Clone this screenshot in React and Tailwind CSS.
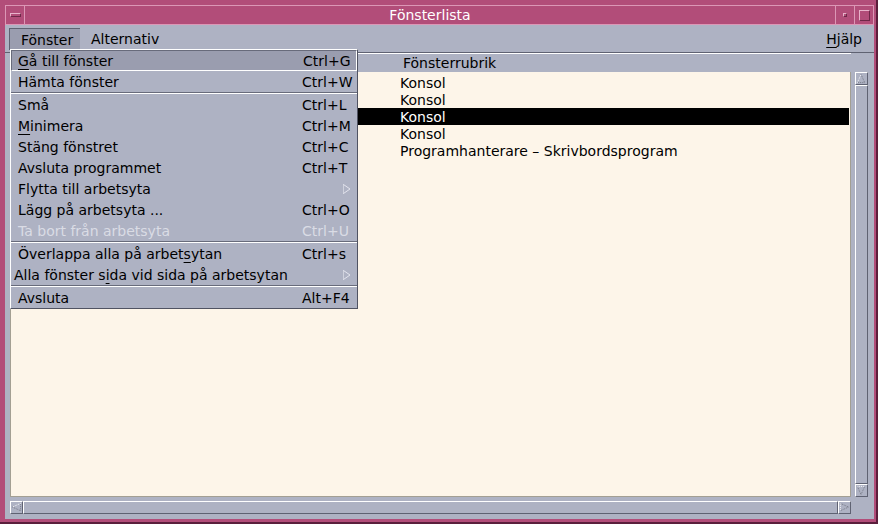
import React from "react";

const Mn = ({ children }) => (
  <span className="underline underline-offset-[3px] decoration-1">{children}</span>
);

const SubArrow = () => (
  <svg width="9" height="10" viewBox="0 0 9 10">
    <path d="M1.5 0.5 V9.5" stroke="#f2f3f7" strokeWidth="1" strokeDasharray="1 1" />
    <path d="M1.5 0.5 L8 5 L1.5 9.5" fill="none" stroke="#e4e6ee" strokeWidth="1" />
  </svg>
);

const MenuItem = ({ label, shortcut, arrow, active, disabled, pl = "pl-[7px]" }) => (
  <div
    className={`flex h-[21px] items-center ${
      active
        ? "bg-[#9a9daf] border-t border-l border-r border-b border-[#686b7b] border-r-white border-b-white"
        : ""
    } ${disabled ? "text-[#dadce5]" : "text-black"}`}
  >
    <div className={`w-[291px] shrink-0 whitespace-nowrap ${active ? "pl-[6px]" : pl}`}>{label}</div>
    <div className="flex-1 whitespace-nowrap">
      {arrow ? (
        <span className="flex pl-[40px]">
          <SubArrow />
        </span>
      ) : (
        shortcut
      )}
    </div>
  </div>
);

const Sep = () => <div className="h-[2px] border-t border-b border-t-[#686b7b] border-b-white" />;

const ArrowBox = ({ dir }) => {
  const paths = {
    up: ["M1.5 10.5 L5.5 1.5", "M5.5 1.5 L9.5 10.5 L1.5 10.5"],
    down: ["M1.5 1.5 L9.5 1.5", "M1.5 1.5 L5.5 10.5 L9.5 1.5"],
    left: ["M10.5 1.5 L1.5 5.5", "M1.5 5.5 L10.5 9.5 L10.5 1.5"],
    right: ["M1.5 1.5 L1.5 9.5", "M1.5 1.5 L10.5 5.5 L1.5 9.5"],
  }[dir];
  return (
    <div className="w-[13px] h-[13px] shrink-0 bg-[#aeb2c3] border border-t-white border-l-white border-r-[#5f6272] border-b-[#5f6272] flex items-center justify-center">
      <svg width="11" height="11" viewBox="0 0 12 12">
        <path d={paths[1]} fill="none" stroke="#70737f" strokeWidth="1" strokeDasharray="1 1" />
        <path d={paths[0]} fill="none" stroke="#ffffff" strokeWidth="1" strokeDasharray="1 1" />
      </svg>
    </div>
  );
};

const rows = ["Konsol", "Konsol", "Konsol", "Konsol", "Programhanterare – Skrivbordsprogram"];

export default function App() {
  return (
    <div className="relative w-[878px] h-[524px] bg-[#b24d79] pt-[5px] pl-[5px] pr-[2px] pb-[3px] border-r-[2px] border-b-[2px] border-[#5a1f3c] flex flex-col font-['DejaVu_Sans',sans-serif] text-[14px] leading-none select-none">
      {/* title bar */}
      <div className="h-[20px] shrink-0 flex border border-[#dc97b6]">
        <div className="w-[19px] border-r border-[#dc97b6] flex items-center justify-center">
          <div className="w-[11px] h-[4px] border border-t-[#e8b2ca] border-l-[#e8b2ca] border-r-[#6e2848] border-b-[#6e2848] bg-[#b24d79]" />
        </div>
        <div className="flex-1 flex items-center justify-center text-white">Fönsterlista</div>
        <div className="w-[19px] border-l border-[#dc97b6] flex items-center justify-center">
          <div className="w-[4px] h-[4px] border border-t-[#e8b2ca] border-l-[#e8b2ca] border-r-[#6e2848] border-b-[#6e2848]" />
        </div>
        <div className="w-[19px] border-l border-[#dc97b6] flex items-center justify-center">
          <div className="w-[11px] h-[11px] border border-t-[#e8b2ca] border-l-[#e8b2ca] border-r-[#6e2848] border-b-[#6e2848]" />
        </div>
      </div>

      {/* panel */}
      <div className="flex-1 bg-[#aeb2c3] flex flex-col">
        <div className="h-[28px] shrink-0 flex items-start pt-[3px] pl-[4px] pr-[12px] border-b border-[#5f6272]">
          <div className="h-[22px] w-[71px] pl-[11px] flex items-center bg-[#9a9daf] border-t border-l border-[#5f6272]">
            Fönster
          </div>
          <div className="h-[22px] ml-[11px] flex items-center">Alternativ</div>
          <div className="h-[22px] ml-auto flex items-center">
            <Mn>H</Mn>jälp
          </div>
        </div>

        <div className="flex-1 flex pl-[5px] pr-[6px] pb-[4px] gap-[4px]">
          <div className="w-[841px] flex flex-col">
            <div className="h-[19px] flex">
              <div className="w-[346px] border-t border-white" />
              <div className="flex-1 border-t border-l border-white flex items-center pl-[46px]">Fönsterrubrik</div>
            </div>
            <div className="h-[425px] bg-[#fdf5e9] border-l border-r border-b border-[#a39f93] pt-[2px] px-[1px]">
              {rows.map((r, i) => (
                <div
                  key={i}
                  className={`h-[17px] flex items-center pl-[388px] whitespace-nowrap ${
                    i === 2 ? "bg-black text-white" : "text-black"
                  }`}
                >
                  {r}
                </div>
              ))}
            </div>
            <div className="mt-[4px] h-[13px] flex">
              <ArrowBox dir="left" />
              <div className="flex-1 border border-t-white border-l-white border-r-[#5f6272] border-b-[#5f6272]" />
              <ArrowBox dir="right" />
            </div>
          </div>
          <div className="w-[13px] pt-[19px]">
            <div className="h-[425px] flex flex-col">
              <ArrowBox dir="up" />
              <div className="flex-1 border border-t-white border-l-white border-r-[#5f6272] border-b-[#5f6272]" />
              <ArrowBox dir="down" />
            </div>
          </div>
        </div>
      </div>

      {/* dropdown menu */}
      <div className="absolute left-[10px] top-[49px] w-[348px] bg-[#aeb2c3] border border-t-white border-l-white border-r-[#505362] border-b-[#505362]">
        <MenuItem active label={<><Mn>G</Mn>å till fönster</>} shortcut="Ctrl+G" />
        <MenuItem label="Hämta fönster" shortcut="Ctrl+W" />
        <Sep />
        <MenuItem label="Små" shortcut="Ctrl+L" />
        <MenuItem label={<><Mn>M</Mn>inimera</>} shortcut="Ctrl+M" />
        <MenuItem label="Stäng fönstret" shortcut="Ctrl+C" />
        <MenuItem label="Avsluta programmet" shortcut="Ctrl+T" />
        <MenuItem label="Flytta till arbetsyta" arrow />
        <MenuItem label="Lägg på arbetsyta ..." shortcut="Ctrl+O" />
        <MenuItem disabled label="Ta bort från arbetsyta" shortcut="Ctrl+U" />
        <Sep />
        <MenuItem label={<>Överlappa alla på arbet<Mn>s</Mn>ytan</>} shortcut="Ctrl+s" />
        <MenuItem pl="pl-[3px]" label={<>Alla fönster s<Mn>i</Mn>da vid sida på arbetsytan</>} arrow />
        <Sep />
        <MenuItem label="Avsluta" shortcut="Alt+F4" />
      </div>
    </div>
  );
}
